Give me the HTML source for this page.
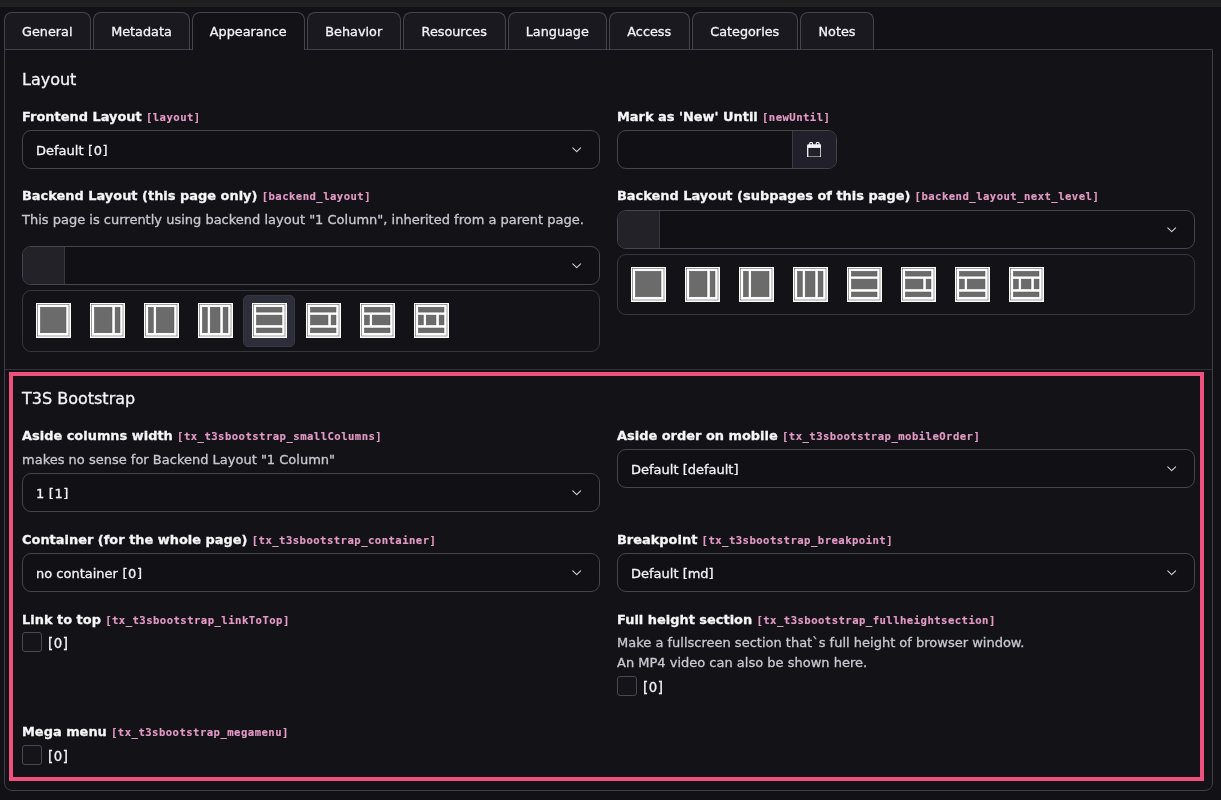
<!DOCTYPE html>
<html lang="en">
<head>
<meta charset="utf-8">
<title>Edit Page - Appearance</title>
<style>
*{box-sizing:border-box;margin:0;padding:0}
html,body{width:1221px;height:800px;overflow:hidden;background:#121116;}
body{position:relative;font-family:"DejaVu Sans","Liberation Sans",sans-serif;font-size:13px;color:#f2f2f4;-webkit-text-stroke:0.3px currentColor}
#root{position:absolute;left:0;top:0;width:1221px;height:800px;will-change:transform}
.abs{position:absolute}
.topstrip{left:0;top:0;width:1221px;height:8px;background:linear-gradient(#1e1e1e,#222224 7px,#0f0f12 7px,#0f0f12 8px)}
.tab{top:12px;height:37px;border:1px solid #46454c;border-bottom:none;border-radius:8px 8px 0 0;background:#1a191f;text-align:center;line-height:37.5px;font-size:12.8px;color:#f4f4f6}
.tab.active{background:#131217;height:38px}
.panel{left:4px;top:49px;width:1209px;height:742px;border:1px solid #403f46;border-radius:0 0 8px 8px;background:#131217}
.h{font-size:16px;color:#f4f4f6;white-space:nowrap;line-height:20px}
.lbl{font-weight:bold;font-size:12.95px;white-space:nowrap;line-height:16px;color:#f6f6f8}
.lbl code{font-family:"DejaVu Sans Mono","Liberation Mono",monospace;font-weight:bold;font-size:10.6px;letter-spacing:0.46px;color:#e39ac5;margin-left:-0.3px;-webkit-text-stroke:0.15px;position:relative;top:-0.5px}
.desc{font-size:13px;color:#c9c9cf;white-space:nowrap;line-height:19px}
.sel{height:39px;border:1px solid #46454c;border-radius:9px;background:#111015;line-height:39px;padding-left:13px;font-size:13px;color:#f4f4f6;white-space:nowrap}
.sel svg{position:absolute;right:17.5px;top:15px}
.br{letter-spacing:0.55px;margin-left:0.4px}
.iconbox{height:62px;border:1px solid #38373d;border-radius:9px;background:#131217}
.pre{position:absolute;left:0;top:0;width:42px;height:37px;background:#232228;border-right:1px solid #38373e;border-radius:8px 0 0 8px}
.cb{width:20px;height:20px;border:1px solid #4a4950;border-radius:3px;background:#15141a}
.cbl{font-size:13.3px;line-height:24px;color:#f4f4f6;letter-spacing:0.5px}
.sep{left:5px;top:369px;width:1207px;height:1px;background:#333238}
.red{left:9px;top:372px;width:1195px;height:409px;border:4px solid #f0507d}
.ic{position:absolute;width:35px;height:35px}
.icsel{position:absolute;width:52px;height:52px;border-radius:5px;background:#2e2d3a;border:1px solid #383745}
</style>
</head>
<body>
<div id="root">
<div class="abs topstrip"></div>
<div class="abs panel"></div>
<!--TABS-->
<div class="abs tab" style="left:4px;width:86.5px">General</div>
<div class="abs tab" style="left:93px;width:97px">Metadata</div>
<div class="abs tab active" style="left:192px;width:112.5px">Appearance</div>
<div class="abs tab" style="left:307px;width:93.5px">Behavior</div>
<div class="abs tab" style="left:403px;width:102.5px">Resources</div>
<div class="abs tab" style="left:508px;width:98.5px">Language</div>
<div class="abs tab" style="left:609px;width:80.5px">Access</div>
<div class="abs tab" style="left:692px;width:105.5px">Categories</div>
<div class="abs tab" style="left:800px;width:74px">Notes</div>
<!--/TABS-->
<!--CONTENT-->
<div class="abs h" style="left:22px;top:70px">Layout</div>
<div class="abs lbl" style="left:22px;top:109px">Frontend Layout <code>[layout]</code></div>
<div class="abs sel" style="left:22px;top:130px;width:578px">Default <span class="br">[0]</span><svg width="9.4" height="7.5" viewBox="0 0 10 8"><path d="M0.8 2 L5 6.1 L9.2 2" fill="none" stroke="#d6d6da" stroke-width="1.1" stroke-linecap="round" stroke-linejoin="round"/></svg></div>
<div class="abs lbl" style="left:617px;top:109px">Mark as 'New' Until <code>[newUntil]</code></div>
<div class="abs sel" style="left:617px;top:130px;width:220px;padding:0"><span class="abs" style="left:174px;top:0;width:44px;height:37px;background:#211f29;border-left:1px solid #3c3b42;border-radius:0 8px 8px 0"></span><svg style="position:absolute;left:188.7px;right:auto;top:10.5px" width="14.6" height="15.8" viewBox="0 0 14.6 15.8"><rect x="0.7" y="3" width="13.2" height="12.1" rx="0.8" fill="none" stroke="#f4f4f6" stroke-width="1.3"/><rect x="0.7" y="3.2" width="13.2" height="2.7" fill="#f4f4f6"/><rect x="2.7" y="0.55" width="2.9" height="3.4" rx="0.9" fill="none" stroke="#f4f4f6" stroke-width="1.1"/><rect x="9.2" y="0.55" width="2.9" height="3.4" rx="0.9" fill="none" stroke="#f4f4f6" stroke-width="1.1"/></svg></div>
<div class="abs lbl" style="left:22px;top:188px">Backend Layout (this page only) <code>[backend_layout]</code></div>
<div class="abs desc" style="left:22px;top:210px">This page is currently using backend layout "1 Column", inherited from a parent page.</div>
<div class="abs sel" style="left:22px;top:246px;width:578px"><span class="pre"></span><svg width="9.4" height="7.5" viewBox="0 0 10 8"><path d="M0.8 2 L5 6.1 L9.2 2" fill="none" stroke="#d6d6da" stroke-width="1.1" stroke-linecap="round" stroke-linejoin="round"/></svg></div>
<div class="abs iconbox" style="left:22px;top:290px;width:578px;height:62px"><span class="ic" style="left:13px;top:12px"><svg width="35" height="35" viewBox="0 0 35 35"><rect x="0" y="0" width="35" height="35" fill="#fff"/><rect x="1.5" y="1.5" width="31.5" height="31.5" fill="none" stroke="#5a5a5a" stroke-width="0.6"/><rect x="4.4" y="4.2" width="25.6" height="25.6" fill="#6b6b6b" stroke="#585858" stroke-width="0.5"/></svg></span><span class="ic" style="left:67px;top:12px"><svg width="35" height="35" viewBox="0 0 35 35"><rect x="0" y="0" width="35" height="35" fill="#fff"/><rect x="1.5" y="1.5" width="31.5" height="31.5" fill="none" stroke="#5a5a5a" stroke-width="0.6"/><rect x="4.4" y="4.2" width="17.6" height="25.6" fill="#6b6b6b" stroke="#585858" stroke-width="0.5"/><rect x="25.1" y="4.2" width="4.9" height="25.6" fill="#6b6b6b" stroke="#585858" stroke-width="0.5"/></svg></span><span class="ic" style="left:121px;top:12px"><svg width="35" height="35" viewBox="0 0 35 35"><rect x="0" y="0" width="35" height="35" fill="#fff"/><rect x="1.5" y="1.5" width="31.5" height="31.5" fill="none" stroke="#5a5a5a" stroke-width="0.6"/><rect x="4.4" y="4.2" width="5.0" height="25.6" fill="#6b6b6b" stroke="#585858" stroke-width="0.5"/><rect x="12.2" y="4.2" width="17.8" height="25.6" fill="#6b6b6b" stroke="#585858" stroke-width="0.5"/></svg></span><span class="ic" style="left:175px;top:12px"><svg width="35" height="35" viewBox="0 0 35 35"><rect x="0" y="0" width="35" height="35" fill="#fff"/><rect x="1.5" y="1.5" width="31.5" height="31.5" fill="none" stroke="#5a5a5a" stroke-width="0.6"/><rect x="4.4" y="4.2" width="5.0" height="25.6" fill="#6b6b6b" stroke="#585858" stroke-width="0.5"/><rect x="12.2" y="4.2" width="9.8" height="25.6" fill="#6b6b6b" stroke="#585858" stroke-width="0.5"/><rect x="25.1" y="4.2" width="4.9" height="25.6" fill="#6b6b6b" stroke="#585858" stroke-width="0.5"/></svg></span><span class="icsel" style="left:220px;top:4px"></span><span class="ic" style="left:229px;top:12px"><svg width="35" height="35" viewBox="0 0 35 35"><rect x="0" y="0" width="35" height="35" fill="#fff"/><rect x="1.5" y="1.5" width="31.5" height="31.5" fill="none" stroke="#5a5a5a" stroke-width="0.6"/><rect x="4.4" y="4.2" width="25.6" height="4.9" fill="#6b6b6b" stroke="#585858" stroke-width="0.5"/><rect x="4.4" y="12.1" width="25.6" height="9.8" fill="#6b6b6b" stroke="#585858" stroke-width="0.5"/><rect x="4.4" y="25.0" width="25.6" height="4.8" fill="#6b6b6b" stroke="#585858" stroke-width="0.5"/></svg></span><span class="ic" style="left:283px;top:12px"><svg width="35" height="35" viewBox="0 0 35 35"><rect x="0" y="0" width="35" height="35" fill="#fff"/><rect x="1.5" y="1.5" width="31.5" height="31.5" fill="none" stroke="#5a5a5a" stroke-width="0.6"/><rect x="4.4" y="4.2" width="25.6" height="4.9" fill="#6b6b6b" stroke="#585858" stroke-width="0.5"/><rect x="4.4" y="12.1" width="17.6" height="9.8" fill="#6b6b6b" stroke="#585858" stroke-width="0.5"/><rect x="25.1" y="12.1" width="4.9" height="9.8" fill="#6b6b6b" stroke="#585858" stroke-width="0.5"/><rect x="4.4" y="25.0" width="25.6" height="4.8" fill="#6b6b6b" stroke="#585858" stroke-width="0.5"/></svg></span><span class="ic" style="left:337px;top:12px"><svg width="35" height="35" viewBox="0 0 35 35"><rect x="0" y="0" width="35" height="35" fill="#fff"/><rect x="1.5" y="1.5" width="31.5" height="31.5" fill="none" stroke="#5a5a5a" stroke-width="0.6"/><rect x="4.4" y="4.2" width="25.6" height="4.9" fill="#6b6b6b" stroke="#585858" stroke-width="0.5"/><rect x="4.4" y="12.1" width="5.0" height="9.8" fill="#6b6b6b" stroke="#585858" stroke-width="0.5"/><rect x="12.2" y="12.1" width="17.8" height="9.8" fill="#6b6b6b" stroke="#585858" stroke-width="0.5"/><rect x="4.4" y="25.0" width="25.6" height="4.8" fill="#6b6b6b" stroke="#585858" stroke-width="0.5"/></svg></span><span class="ic" style="left:391px;top:12px"><svg width="35" height="35" viewBox="0 0 35 35"><rect x="0" y="0" width="35" height="35" fill="#fff"/><rect x="1.5" y="1.5" width="31.5" height="31.5" fill="none" stroke="#5a5a5a" stroke-width="0.6"/><rect x="4.4" y="4.2" width="25.6" height="4.9" fill="#6b6b6b" stroke="#585858" stroke-width="0.5"/><rect x="4.4" y="12.1" width="5.0" height="9.8" fill="#6b6b6b" stroke="#585858" stroke-width="0.5"/><rect x="12.2" y="12.1" width="9.8" height="9.8" fill="#6b6b6b" stroke="#585858" stroke-width="0.5"/><rect x="25.1" y="12.1" width="4.9" height="9.8" fill="#6b6b6b" stroke="#585858" stroke-width="0.5"/><rect x="4.4" y="25.0" width="25.6" height="4.8" fill="#6b6b6b" stroke="#585858" stroke-width="0.5"/></svg></span></div>
<div class="abs lbl" style="left:617px;top:188px">Backend Layout (subpages of this page) <code>[backend_layout_next_level]</code></div>
<div class="abs sel" style="left:617px;top:210px;width:578px"><span class="pre"></span><svg width="9.4" height="7.5" viewBox="0 0 10 8"><path d="M0.8 2 L5 6.1 L9.2 2" fill="none" stroke="#d6d6da" stroke-width="1.1" stroke-linecap="round" stroke-linejoin="round"/></svg></div>
<div class="abs iconbox" style="left:617px;top:254px;width:578px;height:61px"><span class="ic" style="left:13px;top:12px"><svg width="35" height="35" viewBox="0 0 35 35"><rect x="0" y="0" width="35" height="35" fill="#fff"/><rect x="1.5" y="1.5" width="31.5" height="31.5" fill="none" stroke="#5a5a5a" stroke-width="0.6"/><rect x="4.4" y="4.2" width="25.6" height="25.6" fill="#6b6b6b" stroke="#585858" stroke-width="0.5"/></svg></span><span class="ic" style="left:67px;top:12px"><svg width="35" height="35" viewBox="0 0 35 35"><rect x="0" y="0" width="35" height="35" fill="#fff"/><rect x="1.5" y="1.5" width="31.5" height="31.5" fill="none" stroke="#5a5a5a" stroke-width="0.6"/><rect x="4.4" y="4.2" width="17.6" height="25.6" fill="#6b6b6b" stroke="#585858" stroke-width="0.5"/><rect x="25.1" y="4.2" width="4.9" height="25.6" fill="#6b6b6b" stroke="#585858" stroke-width="0.5"/></svg></span><span class="ic" style="left:121px;top:12px"><svg width="35" height="35" viewBox="0 0 35 35"><rect x="0" y="0" width="35" height="35" fill="#fff"/><rect x="1.5" y="1.5" width="31.5" height="31.5" fill="none" stroke="#5a5a5a" stroke-width="0.6"/><rect x="4.4" y="4.2" width="5.0" height="25.6" fill="#6b6b6b" stroke="#585858" stroke-width="0.5"/><rect x="12.2" y="4.2" width="17.8" height="25.6" fill="#6b6b6b" stroke="#585858" stroke-width="0.5"/></svg></span><span class="ic" style="left:175px;top:12px"><svg width="35" height="35" viewBox="0 0 35 35"><rect x="0" y="0" width="35" height="35" fill="#fff"/><rect x="1.5" y="1.5" width="31.5" height="31.5" fill="none" stroke="#5a5a5a" stroke-width="0.6"/><rect x="4.4" y="4.2" width="5.0" height="25.6" fill="#6b6b6b" stroke="#585858" stroke-width="0.5"/><rect x="12.2" y="4.2" width="9.8" height="25.6" fill="#6b6b6b" stroke="#585858" stroke-width="0.5"/><rect x="25.1" y="4.2" width="4.9" height="25.6" fill="#6b6b6b" stroke="#585858" stroke-width="0.5"/></svg></span><span class="ic" style="left:229px;top:12px"><svg width="35" height="35" viewBox="0 0 35 35"><rect x="0" y="0" width="35" height="35" fill="#fff"/><rect x="1.5" y="1.5" width="31.5" height="31.5" fill="none" stroke="#5a5a5a" stroke-width="0.6"/><rect x="4.4" y="4.2" width="25.6" height="4.9" fill="#6b6b6b" stroke="#585858" stroke-width="0.5"/><rect x="4.4" y="12.1" width="25.6" height="9.8" fill="#6b6b6b" stroke="#585858" stroke-width="0.5"/><rect x="4.4" y="25.0" width="25.6" height="4.8" fill="#6b6b6b" stroke="#585858" stroke-width="0.5"/></svg></span><span class="ic" style="left:283px;top:12px"><svg width="35" height="35" viewBox="0 0 35 35"><rect x="0" y="0" width="35" height="35" fill="#fff"/><rect x="1.5" y="1.5" width="31.5" height="31.5" fill="none" stroke="#5a5a5a" stroke-width="0.6"/><rect x="4.4" y="4.2" width="25.6" height="4.9" fill="#6b6b6b" stroke="#585858" stroke-width="0.5"/><rect x="4.4" y="12.1" width="17.6" height="9.8" fill="#6b6b6b" stroke="#585858" stroke-width="0.5"/><rect x="25.1" y="12.1" width="4.9" height="9.8" fill="#6b6b6b" stroke="#585858" stroke-width="0.5"/><rect x="4.4" y="25.0" width="25.6" height="4.8" fill="#6b6b6b" stroke="#585858" stroke-width="0.5"/></svg></span><span class="ic" style="left:337px;top:12px"><svg width="35" height="35" viewBox="0 0 35 35"><rect x="0" y="0" width="35" height="35" fill="#fff"/><rect x="1.5" y="1.5" width="31.5" height="31.5" fill="none" stroke="#5a5a5a" stroke-width="0.6"/><rect x="4.4" y="4.2" width="25.6" height="4.9" fill="#6b6b6b" stroke="#585858" stroke-width="0.5"/><rect x="4.4" y="12.1" width="5.0" height="9.8" fill="#6b6b6b" stroke="#585858" stroke-width="0.5"/><rect x="12.2" y="12.1" width="17.8" height="9.8" fill="#6b6b6b" stroke="#585858" stroke-width="0.5"/><rect x="4.4" y="25.0" width="25.6" height="4.8" fill="#6b6b6b" stroke="#585858" stroke-width="0.5"/></svg></span><span class="ic" style="left:391px;top:12px"><svg width="35" height="35" viewBox="0 0 35 35"><rect x="0" y="0" width="35" height="35" fill="#fff"/><rect x="1.5" y="1.5" width="31.5" height="31.5" fill="none" stroke="#5a5a5a" stroke-width="0.6"/><rect x="4.4" y="4.2" width="25.6" height="4.9" fill="#6b6b6b" stroke="#585858" stroke-width="0.5"/><rect x="4.4" y="12.1" width="5.0" height="9.8" fill="#6b6b6b" stroke="#585858" stroke-width="0.5"/><rect x="12.2" y="12.1" width="9.8" height="9.8" fill="#6b6b6b" stroke="#585858" stroke-width="0.5"/><rect x="25.1" y="12.1" width="4.9" height="9.8" fill="#6b6b6b" stroke="#585858" stroke-width="0.5"/><rect x="4.4" y="25.0" width="25.6" height="4.8" fill="#6b6b6b" stroke="#585858" stroke-width="0.5"/></svg></span></div>
<div class="abs sep"></div>
<div class="abs red"></div>
<div class="abs h" style="left:22px;top:389px">T3S Bootstrap</div>
<div class="abs lbl" style="left:22px;top:428px">Aside columns width <code>[tx_t3sbootstrap_smallColumns]</code></div>
<div class="abs desc" style="left:22px;top:450px">makes no sense for Backend Layout "1 Column"</div>
<div class="abs sel" style="left:22px;top:473px;width:578px">1 <span class="br">[1]</span><svg width="9.4" height="7.5" viewBox="0 0 10 8"><path d="M0.8 2 L5 6.1 L9.2 2" fill="none" stroke="#d6d6da" stroke-width="1.1" stroke-linecap="round" stroke-linejoin="round"/></svg></div>
<div class="abs lbl" style="left:617px;top:428px">Aside order on mobile <code>[tx_t3sbootstrap_mobileOrder]</code></div>
<div class="abs sel" style="left:617px;top:449px;width:578px">Default [default]<svg width="9.4" height="7.5" viewBox="0 0 10 8"><path d="M0.8 2 L5 6.1 L9.2 2" fill="none" stroke="#d6d6da" stroke-width="1.1" stroke-linecap="round" stroke-linejoin="round"/></svg></div>
<div class="abs lbl" style="left:22px;top:532px">Container (for the whole page) <code>[tx_t3sbootstrap_container]</code></div>
<div class="abs sel" style="left:22px;top:553px;width:578px">no container <span class="br">[0]</span><svg width="9.4" height="7.5" viewBox="0 0 10 8"><path d="M0.8 2 L5 6.1 L9.2 2" fill="none" stroke="#d6d6da" stroke-width="1.1" stroke-linecap="round" stroke-linejoin="round"/></svg></div>
<div class="abs lbl" style="left:617px;top:532px">Breakpoint <code>[tx_t3sbootstrap_breakpoint]</code></div>
<div class="abs sel" style="left:617px;top:553px;width:578px">Default [md]<svg width="9.4" height="7.5" viewBox="0 0 10 8"><path d="M0.8 2 L5 6.1 L9.2 2" fill="none" stroke="#d6d6da" stroke-width="1.1" stroke-linecap="round" stroke-linejoin="round"/></svg></div>
<div class="abs lbl" style="left:22px;top:612px">Link to top <code>[tx_t3sbootstrap_linkToTop]</code></div>
<div class="abs cb" style="left:22px;top:632px"></div><div class="abs cbl" style="left:48px;top:632px">[0]</div>
<div class="abs lbl" style="left:617px;top:612px">Full height section <code>[tx_t3sbootstrap_fullheightsection]</code></div>
<div class="abs desc" style="left:617px;top:633px">Make a fullscreen section that`s full height of browser window.</div>
<div class="abs desc" style="left:617px;top:652.5px">An MP4 video can also be shown here.</div>
<div class="abs cb" style="left:617px;top:676px"></div><div class="abs cbl" style="left:643px;top:676px">[0]</div>
<div class="abs lbl" style="left:22px;top:724px">Mega menu <code>[tx_t3sbootstrap_megamenu]</code></div>
<div class="abs cb" style="left:22px;top:745px"></div><div class="abs cbl" style="left:48px;top:745px">[0]</div>
<!--/CONTENT-->
</div>
</body>
</html>
